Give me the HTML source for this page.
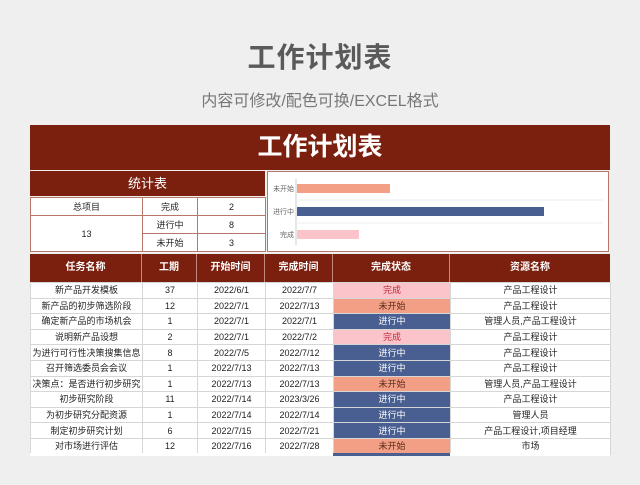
<!DOCTYPE html>
<html><head><meta charset="utf-8"><style>
*{margin:0;padding:0;box-sizing:border-box}
body{width:640px;height:485px;background:#efefef;font-family:"Liberation Sans","Noto Sans CJK SC",sans-serif;position:relative;overflow:hidden}
.a{position:absolute}
.t1{left:0;width:640px;top:36px;text-align:center;font-size:28px;color:#5a5a5a;letter-spacing:1px;font-weight:bold}
.t2{left:0;width:640px;top:87px;text-align:center;font-size:16px;color:#777}
.bar{left:30px;top:125px;width:580px;height:45px;background:#7b1f0e;color:#fff;text-align:center;font-size:25px;font-weight:bold;line-height:45px}
.sh{left:30px;top:171px;width:235px;height:25px;background:#7b1f0e;color:#fff;text-align:center;font-size:13px;line-height:25px}
table{border-collapse:collapse;table-layout:fixed;font-size:9px;color:#222}
td{text-align:center;border:1px solid #c9a59e;background:#fff;padding:0;white-space:nowrap;overflow:hidden}
.st td{height:18px;border-color:#b9776b}
.chart{top:171px;height:81px;background:#fff;border:1px solid #b9776b}
.hd{left:30px;top:254px;width:580px;height:28px;background:#7b1f0e}
.hd div{position:absolute;top:0;height:28px;line-height:28px;color:#fff;font-size:10px;font-weight:bold;text-align:center;border-right:1px solid #c08a80}
.dt td{height:15.6px;line-height:14px;border-color:#d6d6d6}
.w{background:#fac4ca!important;color:#c0283a}
.n{background:#f29f85!important;color:#5a2a1a}
.p{background:#4a5f91!important;color:#fff}
</style></head><body>
<div class="a t1">工作计划表</div>
<div class="a t2">内容可修改/配色可换/EXCEL格式</div>
<div class="a bar">工作计划表</div>
<div class="a sh">统计表</div>
<table class="a st" style="left:30px;top:197px;width:235px">
<colgroup><col style="width:112px"><col style="width:55px"><col style="width:68px"></colgroup>
<tr><td>总项目</td><td>完成</td><td>2</td></tr>
<tr><td rowspan="2">13</td><td>进行中</td><td>8</td></tr>
<tr><td>未开始</td><td>3</td></tr>
</table>
<div class="a chart" style="left:267px;width:342px">
<svg width="340" height="79" style="position:absolute;left:0;top:0">
<line x1="28" y1="7" x2="28" y2="73" stroke="#ccc"/>
<line x1="28" y1="28" x2="335" y2="28" stroke="#eee"/>
<line x1="28" y1="51" x2="335" y2="51" stroke="#eee"/>
<rect x="29" y="12" width="93" height="9" fill="#f29f85"/>
<rect x="29" y="35" width="247" height="9" fill="#4a5f91"/>
<rect x="29" y="58" width="62" height="9" fill="#fac4ca"/>
<text x="26" y="19" font-size="7" fill="#666" text-anchor="end">未开始</text>
<text x="26" y="42" font-size="7" fill="#666" text-anchor="end">进行中</text>
<text x="26" y="65" font-size="7" fill="#666" text-anchor="end">完成</text>
</svg></div>
<div class="a hd">
<div style="left:0;width:112px">任务名称</div>
<div style="left:112px;width:55px">工期</div>
<div style="left:167px;width:68px">开始时间</div>
<div style="left:235px;width:68px">完成时间</div>
<div style="left:303px;width:117px">完成状态</div>
<div style="left:420px;width:160px;border:none">资源名称</div>
</div>
<table class="a dt" style="left:30px;top:282px;width:580px">
<colgroup><col style="width:112px"><col style="width:55px"><col style="width:68px"><col style="width:68px"><col style="width:117px"><col style="width:160px"></colgroup>
<tr><td>新产品开发模板</td><td>37</td><td>2022/6/1</td><td>2022/7/7</td><td class="w">完成</td><td>产品工程设计</td></tr>
<tr><td>新产品的初步筛选阶段</td><td>12</td><td>2022/7/1</td><td>2022/7/13</td><td class="n">未开始</td><td>产品工程设计</td></tr>
<tr><td>确定新产品的市场机会</td><td>1</td><td>2022/7/1</td><td>2022/7/1</td><td class="p">进行中</td><td>管理人员,产品工程设计</td></tr>
<tr><td>说明新产品设想</td><td>2</td><td>2022/7/1</td><td>2022/7/2</td><td class="w">完成</td><td>产品工程设计</td></tr>
<tr><td>为进行可行性决策搜集信息</td><td>8</td><td>2022/7/5</td><td>2022/7/12</td><td class="p">进行中</td><td>产品工程设计</td></tr>
<tr><td>召开筛选委员会会议</td><td>1</td><td>2022/7/13</td><td>2022/7/13</td><td class="p">进行中</td><td>产品工程设计</td></tr>
<tr><td>决策点：是否进行初步研究</td><td>1</td><td>2022/7/13</td><td>2022/7/13</td><td class="n">未开始</td><td>管理人员,产品工程设计</td></tr>
<tr><td>初步研究阶段</td><td>11</td><td>2022/7/14</td><td>2023/3/26</td><td class="p">进行中</td><td>产品工程设计</td></tr>
<tr><td>为初步研究分配资源</td><td>1</td><td>2022/7/14</td><td>2022/7/14</td><td class="p">进行中</td><td>管理人员</td></tr>
<tr><td>制定初步研究计划</td><td>6</td><td>2022/7/15</td><td>2022/7/21</td><td class="p">进行中</td><td>产品工程设计,项目经理</td></tr>
<tr><td>对市场进行评估</td><td>12</td><td>2022/7/16</td><td>2022/7/28</td><td class="n">未开始</td><td>市场</td></tr>
</table>
<div class="a" style="left:30px;top:453px;width:580px;height:3px;background:#fff"></div>
<div class="a" style="left:333px;top:453px;width:117px;height:3px;background:#4a5f91"></div>
</body></html>
